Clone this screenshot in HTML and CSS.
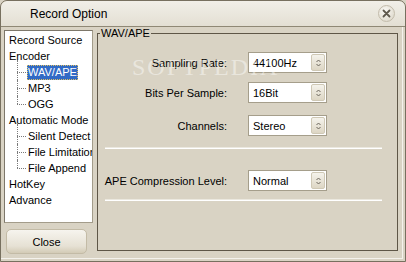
FILE: index.html
```html
<!DOCTYPE html>
<html lang="en">
<head>
    <meta charset="UTF-8">
    <title>Record Option</title>
    <link rel="stylesheet" href="styles.css">
</head>
<body>
    <div class="window">
        <div class="titlebar">
            <span class="title">Record Option</span>
            <span class="close-x">
                <svg width="9" height="9" viewBox="0 0 9 9"><path d="M1.5 1.5 L7.5 7.5 M7.5 1.5 L1.5 7.5" stroke="#5f594d" stroke-width="1.8" stroke-linecap="round"/></svg>
            </span>
        </div>

        <div class="main">
            <div class="sidebar">
                <div class="tree">
                    <ul>
                        <li>Record Source</li>
                        <li>Encoder
                            <ul class="sub">
                                <li class="first"><span class="selected">WAV/APE</span></li>
                                <li><span>MP3</span></li>
                                <li><span>OGG</span></li>
                            </ul>
                        </li>
                        <li>Automatic Mode
                            <ul class="sub">
                                <li class="first"><span>Silent Detect</span></li>
                                <li><span>File Limitation</span></li>
                                <li><span>File Append</span></li>
                            </ul>
                        </li>
                        <li>HotKey</li>
                        <li>Advance</li>
                    </ul>
                </div>
                <button class="btn-close">Close</button>
            </div>

            <div class="group">
                <span class="legend">WAV/APE</span>
                <span class="watermark">SOFTPEDIA</span>

                <div class="row row1">
                    <span class="label">Sampling Rate:</span>
                    <div class="combo"><span class="value">44100Hz</span><span class="spin"><svg width="5" height="8" viewBox="0 0 5 8"><path d="M0.5 3 L2.5 1 L4.5 3 M0.5 5 L2.5 7 L4.5 5" fill="none" stroke="#6a655a" stroke-width="1"/></svg></span></div>
                </div>
                <div class="row row2">
                    <span class="label">Bits Per Sample:</span>
                    <div class="combo"><span class="value">16Bit</span><span class="spin"><svg width="5" height="8" viewBox="0 0 5 8"><path d="M0.5 3 L2.5 1 L4.5 3 M0.5 5 L2.5 7 L4.5 5" fill="none" stroke="#6a655a" stroke-width="1"/></svg></span></div>
                </div>
                <div class="row row3">
                    <span class="label">Channels:</span>
                    <div class="combo"><span class="value">Stereo</span><span class="spin"><svg width="5" height="8" viewBox="0 0 5 8"><path d="M0.5 3 L2.5 1 L4.5 3 M0.5 5 L2.5 7 L4.5 5" fill="none" stroke="#6a655a" stroke-width="1"/></svg></span></div>
                </div>
                <div class="sep sep1"></div>
                <div class="row row4">
                    <span class="label">APE Compression Level:</span>
                    <div class="combo"><span class="value">Normal</span><span class="spin"><svg width="5" height="8" viewBox="0 0 5 8"><path d="M0.5 3 L2.5 1 L4.5 3 M0.5 5 L2.5 7 L4.5 5" fill="none" stroke="#6a655a" stroke-width="1"/></svg></span></div>
                </div>
                <div class="sep sep2"></div>
            </div>
        </div>
    </div>
</body>
</html>
```

FILE: styles.css
```css
body {
    margin: 0;
    font-family: "Liberation Sans", Arial, sans-serif;
    font-size: 11px;
    color: #000;
    background: #d9d3c4;
}

.window {
    width: 406px;
    height: 262px;
    box-sizing: border-box;
    border: 1px solid #77705f;
    border-radius: 7px 7px 0 0;
    background: #d9d3c4;
    box-shadow: inset -2px -2px 0 #d9d3c4, inset -3px -3px 0 #f4f2ec;
    display: flex;
    flex-direction: column;
    overflow: hidden;
}

.titlebar {
    height: 25px;
    border-bottom: 1px solid #8f8875;
    background: linear-gradient(#f1efe8, #e3dfd3);
    border-radius: 6px 6px 0 0;
    display: flex;
    align-items: center;
    justify-content: space-between;
    padding: 0 10px 0 29px;
}

.title {
    font-size: 12px;
}

.close-x {
    width: 15px;
    height: 15px;
    border-radius: 50%;
    border: 1px solid #c2bbaa;
    background: radial-gradient(circle at 40% 35%, #fbfaf6, #d8d2c3);
    display: flex;
    align-items: center;
    justify-content: center;
}

.main {
    display: flex;
    padding: 3px 0 0 3px;
    gap: 4px;
}

.sidebar {
    width: 89px;
    display: flex;
    flex-direction: column;
}

.tree {
    height: 193px;
    box-sizing: border-box;
    background: #fff;
    border: 1px solid #a39c8a;
    border-top-color: #7d776a;
    border-left-color: #7d776a;
    padding: 1px 0 0 4px;
    overflow: hidden;
}

.tree ul {
    list-style: none;
    margin: 0;
    padding: 0;
}

.tree li {
    line-height: 16px;
    white-space: nowrap;
}

.tree .sub {
    margin-left: 8px;
}

.tree .sub li {
    position: relative;
    padding-left: 10px;
}

.tree .sub li span {
    padding: 1px 1px 2px;
}

.tree .sub li::before {
    content: '';
    position: absolute;
    left: 0;
    top: 8px;
    width: 9px;
    border-top: 1px dotted #7a7a7a;
}

.tree .sub li::after {
    content: '';
    position: absolute;
    left: 0;
    top: 0;
    bottom: 0;
    border-left: 1px dotted #7a7a7a;
}

.tree .sub li.first::after {
    top: -4px;
}

.tree .sub li:last-child::after {
    bottom: auto;
    height: 8px;
}

.tree .selected {
    background: #316ac5;
    color: #fff;
    outline: 1px dotted #e0c060;
    outline-offset: -1px;
}

.btn-close {
    margin-top: 6px;
    margin-left: 2px;
    width: 81px;
    height: 25px;
    font-family: "Liberation Sans", Arial, sans-serif;
    font-size: 11px;
    color: #000;
    border: 1px solid #c3bba6;
    border-radius: 5px;
    background: linear-gradient(#f6f4ee, #e6e1d4 70%, #d3cbb6);
    padding: 0;
}

.group {
    position: relative;
    margin-top: 3px;
    width: 301px;
    height: 218px;
    box-sizing: border-box;
    border: 1px solid #5e5647;
    display: flex;
    flex-direction: column;
}

.legend {
    position: absolute;
    top: -7px;
    left: 2px;
    padding: 0 1px;
    background: #d9d3c4;
    line-height: 13px;
}

.watermark {
    position: absolute;
    left: 34px;
    top: 20px;
    font-family: "Liberation Serif", serif;
    font-size: 24px;
    letter-spacing: 2px;
    color: rgba(255, 255, 255, 0.45);
}

.row {
    display: flex;
    align-items: center;
    gap: 21px;
    height: 21px;
}

.row1 { margin-top: 18px; }
.row2 { margin-top: 9px; }
.row3 { margin-top: 12px; }
.row4 { margin-top: 21px; }

.label {
    width: 129px;
    text-align: right;
}

.combo {
    width: 79px;
    height: 21px;
    box-sizing: border-box;
    border: 1px solid #a59e8b;
    background: #fff;
    display: flex;
    align-items: center;
}

.combo .value {
    flex: 1;
    padding-left: 4px;
}

.spin {
    width: 14px;
    height: 17px;
    box-sizing: border-box;
    margin-right: 1px;
    border: 1px solid #cfc8b5;
    border-radius: 2px;
    background: linear-gradient(#f5f3ec, #ddd6c4);
    display: flex;
    align-items: center;
    justify-content: center;
}

.sep {
    height: 1px;
    margin: 0 15px 0 7px;
    border-top: 1px solid #ebe8df;
    background: #fff;
}

.sep1 { margin-top: 11px; }
.sep2 { margin-top: 8px; }
```
